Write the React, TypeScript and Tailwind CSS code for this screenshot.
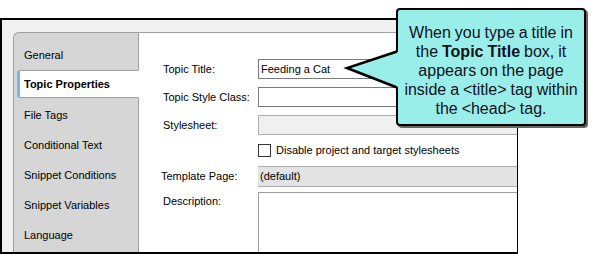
const tabs = [
  "General",
  "Topic Properties",
  "File Tags",
  "Conditional Text",
  "Snippet Conditions",
  "Snippet Variables",
  "Language",
];

function TabList() {
  return (
    <div className="w-[125px] shrink-0 bg-[#d6d6d6] border-l border-t border-[#a0a0a0] rounded-tl-[6px] pt-[7px]">
      {tabs.map((t) =>
        t === "Topic Properties" ? (
          <div
            key={t}
            className="relative z-10 ml-[3px] -mr-px mb-[2px] flex h-[28px] items-center rounded-l-[3px] border border-l-[3px] border-[#a0a0a0] border-l-[#79b4ea] border-r-white bg-white pl-[4px] font-bold"
          >
            {t}
          </div>
        ) : (
          <div key={t} className="flex h-[30px] items-center pl-[10px]">
            {t}
          </div>
        )
      )}
    </div>
  );
}

function Row({ label, children, className = "" }: { label: string; children: React.ReactNode; className?: string }) {
  return (
    <div className={`flex items-center ${className}`}>
      <div className="w-[95px] shrink-0">{label}</div>
      {children}
    </div>
  );
}

function Form() {
  return (
    <div className="flex-1 overflow-hidden bg-white border-l border-t border-[#a0a0a0] pl-[24px] pt-[26px]">
      <Row label="Topic Title:">
        <div className="flex h-[20px] w-[300px] shrink-0 items-center border border-[#7a7a7a] pl-[2px]">Feeding a Cat</div>
      </Row>
      <Row label="Topic Style Class:" className="mt-[8px]">
        <div className="h-[20px] w-[300px] shrink-0 border border-[#7a7a7a]" />
      </Row>
      <Row label="Stylesheet:" className="mt-[8px]">
        <div className="h-[20px] w-[300px] shrink-0 border border-[#adadad] bg-[#f0f0f0]" />
      </Row>
      <div className="mt-[9px] flex h-[13px] items-center pl-[95px]">
        <div className="h-[13px] w-[13px] shrink-0 border border-[#333] bg-white" />
        <span className="ml-[5px]">Disable project and target stylesheets</span>
      </div>
      <Row label="Template Page:" className="mt-[9px] -ml-[2px]">
        <div className="ml-[2px] flex h-[21px] w-[300px] shrink-0 items-center border-y border-[#adadad] bg-[#e3e3e3] pl-[2px]">(default)</div>
      </Row>
      <div className="mt-[5px] flex items-start">
        <div className="w-[95px] shrink-0 pt-[1px]">Description:</div>
        <div className="h-[80px] w-[300px] shrink-0 border border-[#a0a0a0]" />
      </div>
    </div>
  );
}

function Callout() {
  return (
    <>
      <svg className="absolute left-[340px] top-[45px] z-20" width="60" height="50" viewBox="0 0 60 50">
        <polygon points="7,23 57,7 60,7 60,42 57,42" fill="#9aeeea" />
        <polyline points="57,6.5 7,23 57,42.5" fill="none" stroke="#000" strokeWidth="2.5" strokeLinejoin="miter" />
      </svg>
      <div className="absolute left-[396px] top-[8px] z-10 h-[118px] w-[190px] rounded-[4px] border-2 border-black bg-[#9aeeea] pt-[13px] text-center text-[16px] leading-[19px] text-[#111122] shadow-[2px_2px_0_#666] [word-spacing:-0.5px]">
        When you type a title in
        <br />
        the <b>Topic Title</b> box, it
        <br />
        appears on the page
        <br />
        inside a &lt;title&gt; tag within
        <br />
        the &lt;head&gt; tag.
      </div>
    </>
  );
}

export default function App() {
  return (
    <div className="relative h-[254px] w-[595px] overflow-hidden bg-white font-['Liberation_Sans',Arial,sans-serif] text-[11px] text-black">
      <div className="mt-[18px] flex h-[236px] w-[518px] border-l-2 border-t-2 border-r border-b-2 border-black bg-[#f0f0f0] pl-[11px] pt-[12px]">
        <TabList />
        <Form />
      </div>
      <Callout />
    </div>
  );
}
